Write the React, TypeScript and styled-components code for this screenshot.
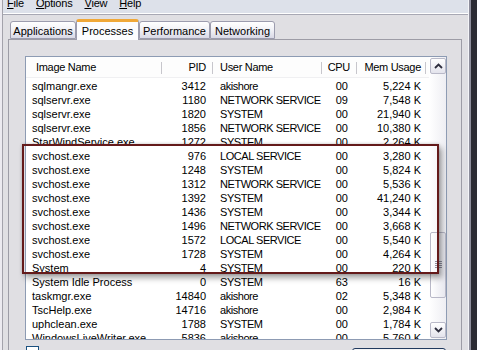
import styled, { createGlobalStyle } from 'styled-components';

const GlobalStyle = createGlobalStyle`
  html, body {
    margin: 0;
    padding: 0;
    background: #e0dfe3;
    font-family: "Liberation Sans", Tahoma, Arial, sans-serif;
    font-size: 11px;
    color: #000;
  }
`;

const Window = styled.div`
  display: flex;
  flex-direction: row;
  width: 477px;
  height: 350px;
  overflow: hidden;
`;

const LeftFrame = styled.div`
  width: 2px;
  flex-shrink: 0;
  background: #eceaf0;
  border-right: 1px solid #a3a2ab;
`;

const RightFrame = styled.div`
  width: 9px;
  flex-shrink: 0;
  background: linear-gradient(
    to right,
    #f4f4f8 0,
    #f4f4f8 1px,
    #8d8d9b 1px,
    #8d8d9b 3px,
    #2b2b33 3px
  );
`;

const Main = styled.div`
  flex: 1;
  display: flex;
  flex-direction: column;
  min-width: 0;
  overflow: hidden;
`;

const MenuBar = styled.div`
  flex-shrink: 0;
  height: 13px;
  background: #dde1ea;
  border-bottom: 1px solid #ffffff;
  display: flex;
  gap: 12px;
  padding-left: 4px;
  overflow: hidden;
`;

const MenuItem = styled.span`
  line-height: 13px;
  margin-top: -3px;
  letter-spacing: -0.2px;
  &::first-letter {
    text-decoration: underline;
  }
`;

const Body = styled.div`
  flex: 1 0 auto;
  border-top: 1px solid #a8a8b4;
  padding: 4px 6px 0 5px;
  display: flex;
  flex-direction: column;
`;

const TabStrip = styled.div`
  flex-shrink: 0;
  display: flex;
  align-items: flex-end;
  height: 20px;
  padding-left: 2px;
  position: relative;
  z-index: 1;
`;

const Tab = styled.div<{ $active?: boolean; $w: number }>`
  box-sizing: border-box;
  width: ${(p) => p.$w}px;
  height: ${(p) => (p.$active ? 21 : 18)}px;
  margin-bottom: ${(p) => (p.$active ? -1 : 0)}px;
  border: 1px solid #9c9cae;
  border-bottom: ${(p) => (p.$active ? 'none' : '1px solid #9c9cae')};
  border-top: ${(p) => (p.$active ? '3px solid #f0a838' : '1px solid #9c9cae')};
  border-radius: 3px 3px 0 0;
  display: flex;
  align-items: center;
  justify-content: center;
  padding-top: ${(p) => (p.$active ? 0 : 2)}px;
  background: ${(p) =>
    p.$active
      ? '#fcfcfe'
      : 'linear-gradient(to bottom, #ffffff 0%, #f1f1f6 50%, #d9d9e6 100%)'};
  white-space: nowrap;
`;

const Panel = styled.div`
  flex: 1 0 auto;
  border: 1px solid #9d9ca6;
  border-bottom: none;
  background: #e0dfe3;
  padding: 16px 14px 0 16px;
  display: flex;
  flex-direction: column;
`;

const ListView = styled.div`
  position: relative;
  flex-shrink: 0;
  box-sizing: border-box;
  width: 422px;
  height: 284px;
  border: 1px solid #8d9bb3;
  background: #ffffff;
  display: flex;
  flex-direction: row;
`;

const Table = styled.div`
  flex: 1;
  display: flex;
  flex-direction: column;
  overflow: hidden;
`;

const HeaderRow = styled.div`
  flex-shrink: 0;
  display: flex;
  height: 20px;
  border-bottom: 1px solid #f0f0f2;
  background: #fdfdfd;
  margin-bottom: 1px;
`;

const HeaderCell = styled.div<{ $w: number; $right?: boolean; $pad: number }>`
  box-sizing: border-box;
  flex-shrink: 0;
  width: ${(p) => p.$w}px;
  line-height: 20px;
  text-align: ${(p) => (p.$right ? 'right' : 'left')};
  ${(p) => (p.$right ? `padding-right: ${p.$pad}px;` : `padding-left: ${p.$pad}px;`)}
  letter-spacing: -0.3px;
  position: relative;
  white-space: nowrap;
  &::after {
    content: '';
    position: absolute;
    right: 0;
    top: 5px;
    height: 12px;
    width: 1px;
    background: #c7c6cc;
  }
`;

const Row = styled.div<{ $clipped?: boolean }>`
  display: flex;
  height: ${(p) => (p.$clipped ? 10 : 14)}px;
  margin-bottom: ${(p) => (p.$clipped ? 4 : 0)}px;
  overflow: hidden;
  flex-shrink: 0;
`;

const Cell = styled.div<{ $w: number; $right?: boolean; $pad: number; $tight?: boolean }>`
  box-sizing: border-box;
  flex-shrink: 0;
  width: ${(p) => p.$w}px;
  line-height: 14px;
  text-align: ${(p) => (p.$right ? 'right' : 'left')};
  ${(p) => (p.$right ? `padding-right: ${p.$pad}px;` : `padding-left: ${p.$pad}px;`)}
  letter-spacing: ${(p) => (p.$tight ? '-0.45px' : 'normal')};
  white-space: nowrap;
  overflow: hidden;
`;

const ScrollBar = styled.div`
  width: 17px;
  flex-shrink: 0;
  box-sizing: border-box;
  padding: 1px 0 1px 1px;
  background: linear-gradient(to right, #ffffff, #eeeef3);
  display: flex;
  flex-direction: column;
`;

const ScrollButton = styled.div`
  flex-shrink: 0;
  box-sizing: border-box;
  width: 16px;
  height: 16px;
  border: 1px solid #b9b9c8;
  border-radius: 2px;
  background: linear-gradient(to bottom, #ffffff, #e3e3ec);
  display: flex;
  align-items: center;
  justify-content: center;
`;

const Track = styled.div`
  flex: 1;
`;

const Thumb = styled.div<{ $top: number; $h: number }>`
  box-sizing: border-box;
  margin-top: ${(p) => p.$top}px;
  height: ${(p) => p.$h}px;
  width: 16px;
  border: 1px solid #b9b9c8;
  border-radius: 2px;
  background: linear-gradient(to right, #ffffff, #e8e8ef);
  display: flex;
  align-items: center;
  justify-content: center;
`;

const HighlightBox = styled.div`
  position: absolute;
  left: -4px;
  top: 87px;
  width: 417px;
  height: 130px;
  box-sizing: border-box;
  border: 2px solid #641a1a;
  box-shadow: 0 0 3px rgba(0, 0, 0, 0.2), 3px 4px 6px rgba(0, 0, 0, 0.35);
  pointer-events: none;
`;

const BottomBar = styled.div`
  display: flex;
  align-items: flex-start;
  margin-top: 6px;
  padding-left: 1px;
`;

const CheckBox = styled.div`
  width: 13px;
  height: 13px;
  box-sizing: border-box;
  border: 1px solid #1c5180;
  background: #fff;
`;

const Button = styled.div`
  margin-left: auto;
  margin-right: 1px;
  margin-top: 2px;
  width: 94px;
  height: 23px;
  box-sizing: border-box;
  border: 1px solid #21395e;
  border-radius: 3px;
  background: #f4f4f6;
`;

const cols = [
  { w: 136, right: false, pad: 6, hpad: 10 },
  { w: 51, right: true, pad: 7, hpad: 7 },
  { w: 109, right: false, pad: 7, hpad: 7, tight: true },
  { w: 35, right: true, pad: 9, hpad: 7 },
  { w: 69, right: true, pad: 5, hpad: 5 },
];

const headers = ['Image Name', 'PID', 'User Name', 'CPU', 'Mem Usage'];

const rows: string[][] = [
  ['sqlmangr.exe', '3412', 'akishore', '00', '5,224 K'],
  ['sqlservr.exe', '1180', 'NETWORK SERVICE', '09', '7,548 K'],
  ['sqlservr.exe', '1820', 'SYSTEM', '00', '21,940 K'],
  ['sqlservr.exe', '1856', 'NETWORK SERVICE', '00', '10,380 K'],
  ['StarWindService.exe', '1272', 'SYSTEM', '00', '2,264 K'],
  ['svchost.exe', '976', 'LOCAL SERVICE', '00', '3,280 K'],
  ['svchost.exe', '1248', 'SYSTEM', '00', '5,824 K'],
  ['svchost.exe', '1312', 'NETWORK SERVICE', '00', '5,536 K'],
  ['svchost.exe', '1392', 'SYSTEM', '00', '41,240 K'],
  ['svchost.exe', '1436', 'SYSTEM', '00', '3,344 K'],
  ['svchost.exe', '1496', 'NETWORK SERVICE', '00', '3,668 K'],
  ['svchost.exe', '1572', 'LOCAL SERVICE', '00', '5,540 K'],
  ['svchost.exe', '1728', 'SYSTEM', '00', '4,264 K'],
  ['System', '4', 'SYSTEM', '00', '220 K'],
  ['System Idle Process', '0', 'SYSTEM', '63', '16 K'],
  ['taskmgr.exe', '14840', 'akishore', '02', '5,348 K'],
  ['TscHelp.exe', '14716', 'akishore', '00', '2,984 K'],
  ['uphclean.exe', '1788', 'SYSTEM', '00', '1,784 K'],
  ['WindowsLiveWriter.exe', '5836', 'akishore', '00', '5,760 K'],
];

const Chevron = ({ up }: { up?: boolean }) => (
  <svg width="9" height="6" viewBox="0 0 9 6">
    <path
      d={up ? 'M1 5 L4.5 1.5 L8 5' : 'M1 1 L4.5 4.5 L8 1'}
      fill="none"
      stroke="#2e2e3e"
      strokeWidth="1.8"
    />
  </svg>
);

const Grip = () => (
  <svg width="7" height="8" viewBox="0 0 7 8">
    {[0, 2, 4, 6].map((y) => (
      <rect key={y} x="0" y={y} width="7" height="1" fill="#8e8e9e" />
    ))}
  </svg>
);

export default function App() {
  return (
    <>
      <GlobalStyle />
      <Window>
        <LeftFrame />
        <Main>
          <MenuBar>
            <MenuItem>File</MenuItem>
            <MenuItem>Options</MenuItem>
            <MenuItem>View</MenuItem>
            <MenuItem>Help</MenuItem>
          </MenuBar>
          <Body>
            <TabStrip>
              <Tab $w={66}>Applications</Tab>
              <Tab $w={63} $active>Processes</Tab>
              <Tab $w={71}>Performance</Tab>
              <Tab $w={65}>Networking</Tab>
            </TabStrip>
            <Panel>
              <ListView>
                <Table>
                  <HeaderRow>
                    {headers.map((h, i) => (
                      <HeaderCell key={h} $w={cols[i].w} $right={cols[i].right} $pad={cols[i].hpad}>
                        {h}
                      </HeaderCell>
                    ))}
                  </HeaderRow>
                  {rows.map((r, ri) => (
                    <Row key={ri} $clipped={ri === 4}>
                      {r.map((c, i) => (
                        <Cell
                          key={i}
                          $w={cols[i].w}
                          $right={cols[i].right}
                          $pad={cols[i].pad}
                          $tight={cols[i].tight}
                        >
                          {c}
                        </Cell>
                      ))}
                    </Row>
                  ))}
                </Table>
                <ScrollBar>
                  <ScrollButton>
                    <Chevron up />
                  </ScrollButton>
                  <Track>
                    <Thumb $top={158} $h={66}>
                      <Grip />
                    </Thumb>
                  </Track>
                  <ScrollButton>
                    <Chevron />
                  </ScrollButton>
                </ScrollBar>
                <HighlightBox />
              </ListView>
              <BottomBar>
                <CheckBox />
                <Button />
              </BottomBar>
            </Panel>
          </Body>
        </Main>
        <RightFrame />
      </Window>
    </>
  );
}
